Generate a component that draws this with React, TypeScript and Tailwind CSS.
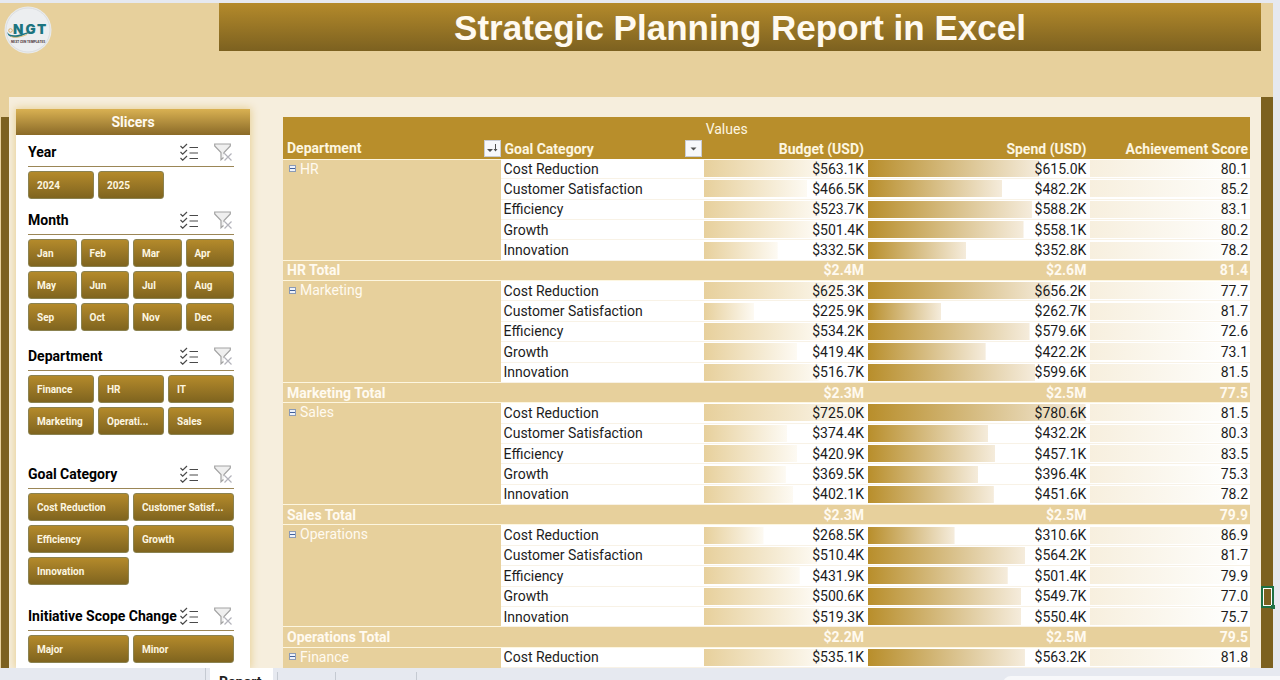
import { FC, useState } from "react";
import clsx from "clsx";

type Row = [category: string, budget: number, spend: number, score: number];

interface Group {
	name: string;
	rows: Row[];
	total?: [string, string, string];
}

const groups: Group[] = [
	{
		name: "HR",
		rows: [
			["Cost Reduction", 563.1, 615.0, 80.1],
			["Customer Satisfaction", 466.5, 482.2, 85.2],
			["Efficiency", 523.7, 588.2, 83.1],
			["Growth", 501.4, 558.1, 80.2],
			["Innovation", 332.5, 352.8, 78.2],
		],
		total: ["$2.4M", "$2.6M", "81.4"],
	},
	{
		name: "Marketing",
		rows: [
			["Cost Reduction", 625.3, 656.2, 77.7],
			["Customer Satisfaction", 225.9, 262.7, 81.7],
			["Efficiency", 534.2, 579.6, 72.6],
			["Growth", 419.4, 422.2, 73.1],
			["Innovation", 516.7, 599.6, 81.5],
		],
		total: ["$2.3M", "$2.5M", "77.5"],
	},
	{
		name: "Sales",
		rows: [
			["Cost Reduction", 725.0, 780.6, 81.5],
			["Customer Satisfaction", 374.4, 432.2, 80.3],
			["Efficiency", 420.9, 457.1, 83.5],
			["Growth", 369.5, 396.4, 75.3],
			["Innovation", 402.1, 451.6, 78.2],
		],
		total: ["$2.3M", "$2.5M", "79.9"],
	},
	{
		name: "Operations",
		rows: [
			["Cost Reduction", 268.5, 310.6, 86.9],
			["Customer Satisfaction", 510.4, 564.2, 81.7],
			["Efficiency", 431.9, 501.4, 79.9],
			["Growth", 500.6, 549.7, 77.0],
			["Innovation", 519.3, 550.4, 75.7],
		],
		total: ["$2.2M", "$2.5M", "79.5"],
	},
	{
		name: "Finance",
		rows: [["Cost Reduction", 535.1, 563.2, 81.8]],
	},
];

const slicers = [
	{ title: "Year", cols: "grid-cols-3", gap: "mt-0.5", items: ["2024", "2025"] },
	{
		title: "Month",
		cols: "grid-cols-4",
		gap: "mt-1.5",
		items: ["Jan", "Feb", "Mar", "Apr", "May", "Jun", "Jul", "Aug", "Sep", "Oct", "Nov", "Dec"],
	},
	{
		title: "Department",
		cols: "grid-cols-3",
		gap: "mt-2.5",
		items: ["Finance", "HR", "IT", "Marketing", "Operati...", "Sales"],
	},
	{
		title: "Goal Category",
		cols: "grid-cols-2",
		gap: "mt-6",
		items: ["Cost Reduction", "Customer Satisf...", "Efficiency", "Growth", "Innovation"],
	},
	{
		title: "Initiative Scope Change",
		cols: "grid-cols-2",
		gap: "mt-4",
		items: ["Major", "Minor"],
	},
];

const Logo: FC = () => (
	<svg viewBox="0 0 48 48" className="h-12 w-12" role="img" aria-label="NGT">
		<circle cx="24" cy="24" r="23.5" fill="#e9ebec" />
		<circle cx="24" cy="24" r="22" fill="#eceef0" stroke="#d6d9db" strokeWidth="0.7" />
		<text x="9" y="27.500" fontFamily="Inter, sans-serif" fontSize="13.500" fontWeight="900" fill="#1c7480">
			<tspan x="9">N</tspan>
			<tspan x="21.500">G</tspan>
			<tspan x="33">T</tspan>
		</text>
		<path d="M3.500 26c1 4 8 4 14 2s11-3 14-1c-6-1-9 1-14 3S4 32 3.500 27z" fill="#1c7480" />
		<path d="M7 30.500c5 2 11 0 16-2" fill="none" stroke="#d8b566" strokeWidth="0.8" />
		<circle cx="6.500" cy="24.500" r="1.800" fill="none" stroke="#d8a85a" strokeWidth="0.9" />
		<text x="7" y="37" fontFamily="Inter, sans-serif" fontSize="3" fontWeight="800" fill="#59494b">
			NEXT GEN TEMPLATES
		</text>
	</svg>
);

const MultiSelectIcon: FC = () => (
	<svg viewBox="0 0 18 18" className="h-[18px] w-[18px]" fill="none" stroke="#4a4a4a" strokeWidth="1.2">
		<path d="M.5 3l2.200 2.200L7 1M.5 9l2.200 2.200L7 7M.5 15l2.200 2.200L7 13M9.500 4.500H18M9.500 10H18M9.500 15.500H18" />
	</svg>
);

const ClearFilterIcon: FC = () => (
	<svg viewBox="0 0 18 18" className="h-[18px] w-[18px]" fill="none" stroke="#a3a3a3" strokeWidth="1.2">
		<path d="M9.500 14.500L7 16.800V9.500L.7 3V1h15.600v2L10 9.500v1.500" fill="#efefef" />
		<path d="M10.500 10.500l7 7M17.500 10.500l-7 7" stroke="#b3b3bb" />
	</svg>
);

const Bar: FC<{ value: number; max: number; tone: string; text: string }> = ({ value, max, tone, text }) => (
	<td
		className={clsx("border-b border-[#f8f2e6] bg-left bg-no-repeat text-right", tone)}
		style={{ backgroundSize: `${(value / max) * 98}% 17px` }}
	>
		{text}
	</td>
);

const Slicer: FC<(typeof slicers)[number]> = ({ title, cols, gap, items }) => {
	const [picked, setPicked] = useState<string>();

	return (
		<section className={clsx("shrink-0", gap)}>
			<div className="flex h-[30px] items-center border-b border-[#9b8656]">
				<h2 className="flex-1 text-sm font-bold whitespace-nowrap text-black">{title}</h2>
				<button type="button" aria-label={`Multi-select ${title}`}>
					<MultiSelectIcon />
				</button>
				<button
					type="button"
					aria-label={`Clear ${title} filter`}
					className="mr-0.5 ml-4"
					onClick={() => setPicked(undefined)}
				>
					<ClearFilterIcon />
				</button>
			</div>
			<div className={clsx("mt-1 grid gap-1", cols)}>
				{items.map((item) => (
					<button
						key={item}
						type="button"
						aria-pressed={picked === item}
						onClick={() => setPicked(item)}
						className="h-7 rounded-[3px] border border-[#8b8250] bg-[linear-gradient(#b48a2b,#7f641f)] pl-2 text-left text-[10px] font-bold whitespace-nowrap text-[#fdf6e0]"
					>
						{item}
					</button>
				))}
			</div>
		</section>
	);
};

const PivotTable: FC = () => (
	<table className="h-full w-full table-fixed border-collapse text-sm leading-4 text-[#1c1c1c]">
		<colgroup>
			<col className="w-[22.5%]" />
			<col className="w-[21%]" />
			<col className="w-[17%]" />
			<col className="w-[23%]" />
			<col className="w-[16.5%]" />
		</colgroup>
		<thead className="bg-[#b88e2b] text-[#fdf6e0]">
			<tr className="h-[21px]">
				<td colSpan={2} />
				<td colSpan={3} className="pt-0.5 pl-0.5">
					Values
				</td>
			</tr>
			<tr className="h-[21px] text-right">
				<th scope="col" className="pl-1">
					<div className="flex h-5 items-center justify-between">
						Department
						<button
							type="button"
							aria-label="Sort Department"
							className="flex h-[17px] w-[17px] items-center justify-center border border-[#c9ccd4] bg-[#f7f8fb]"
						>
							<svg viewBox="0 0 13 13" className="h-[13px] w-[13px]" fill="#505050">
								<path d="M1 7h6l-3 3zM9 2h1v5h1.500l-2 2.500L7.500 7H9z" />
							</svg>
						</button>
					</div>
				</th>
				<th scope="col" className="pl-1">
					<div className="flex h-5 items-center justify-between pr-0.5">
						Goal Category
						<button
							type="button"
							aria-label="Filter Goal Category"
							className="flex h-[17px] w-[17px] items-center justify-center border border-[#c9ccd4] bg-[#f7f8fb]"
						>
							<svg viewBox="0 0 13 13" className="h-[13px] w-[13px]" fill="#505050">
								<path d="M3.500 5.500h6l-3 3z" />
							</svg>
						</button>
					</div>
				</th>
				<th scope="col" className="pr-1">
					Budget (USD)
				</th>
				<th scope="col" className="pr-1">
					Spend (USD)
				</th>
				<th scope="col" className="pr-0.5">
					Achievement Score
				</th>
			</tr>
		</thead>
		{groups.map(({ name, rows, total }) => (
			<tbody key={name} className="bg-white">
				{rows.map(([category, budget, spend, score], i) => (
					<tr key={category}>
						{i === 0 && (
							<th
								scope="rowgroup"
								rowSpan={rows.length}
								className="border-t border-[#fdf6e0] bg-[#e7d09c] pt-0.5 pl-1.5 text-left align-top leading-[14px] font-normal text-[#fffaf0]"
							>
								<div className="flex items-center gap-1">
									<button
										type="button"
										aria-label={`Collapse ${name}`}
										className="flex h-[7px] w-[7px] items-center justify-center border border-[#8c9bb5] bg-[#eef2fa]"
									>
										<span className="h-px w-[5px] bg-[#3f5f9a]" />
									</button>
									{name}
								</div>
							</th>
						)}
						<td className="border-b border-[#f8f2e6] pl-[3px]">{category}</td>
						<Bar
							value={budget}
							max={725}
							tone="bg-[linear-gradient(90deg,#e7d09c,#fdfaf3)] pr-1"
							text={`$${budget.toFixed(1)}K`}
						/>
						<Bar
							value={spend}
							max={780.6}
							tone="bg-[linear-gradient(90deg,#b88e2b,#f5ecdc)] pr-1"
							text={`$${spend.toFixed(1)}K`}
						/>
						<Bar
							value={score}
							max={86.9}
							tone="bg-[linear-gradient(90deg,#f7efde,#fefefc)] pr-0.5"
							text={score.toFixed(1)}
						/>
					</tr>
				))}
				{total && (
					<tr className="border-y border-[#fdf6e0] bg-[#e7d09c] text-right font-bold text-[#fffaf0]">
						<th scope="row" colSpan={2} className="pl-1 text-left">
							{name} Total
						</th>
						{total.map((value, i) => (
							<td key={i} className={i === 2 ? "pr-0.5" : "pr-1"}>
								{value}
							</td>
						))}
					</tr>
				)}
			</tbody>
		))}
	</table>
);

const App: FC = () => (
	<div className="flex h-screen flex-col overflow-hidden bg-[#e6e9f0] font-['Roboto','Liberation_Sans',sans-serif]">
		<div className="mt-[3px] mr-[7px] flex min-h-0 flex-1 flex-col">
			<header className="flex h-[94px] shrink-0 items-start bg-[#e7d09c] pr-3">
				<div className="w-[219px] shrink-0 pt-[3px] pl-1">
					<Logo />
				</div>
				<h1 className="flex h-12 flex-1 items-center justify-center bg-[linear-gradient(#b48a2b,#7c6120)] pt-0.5 font-['Liberation_Sans',sans-serif] text-[35px] font-bold text-[#fffaf0]">
					Strategic Planning Report in Excel
				</h1>
			</header>
			<div className="flex min-h-0 flex-1">
				<div className="w-[9px] shrink-0 border-t-[20px] border-l border-t-[#e7d09c] border-l-[#e7d09c] bg-[#7c6120]" />
				<main className="flex min-w-0 flex-1 overflow-hidden bg-[#f6eedd] pr-[11px] pl-[7px]">
					<aside className="mt-3 flex w-[234px] shrink-0 flex-col overflow-hidden bg-white shadow-[0_0_8px_1px_#e7cf94]">
						<h2 className="h-[26px] shrink-0 bg-[linear-gradient(#d9b152,#8a6a28)] text-center text-sm leading-[26px] font-bold text-[#fffaf0]">
							Slicers
						</h2>
						<div className="flex flex-col pr-4 pl-3">
							{slicers.map((slicer) => (
								<Slicer key={slicer.title} {...slicer} />
							))}
						</div>
					</aside>
					<div className="mt-5 ml-[33px] min-w-0 flex-1">
						<PivotTable />
					</div>
				</main>
				<div className="relative w-3 shrink-0 bg-[#7c6120]">
					<div className="absolute bottom-[60px] left-0 h-[22px] w-[13px] border-2 border-[#1d7145] outline-1 -outline-offset-3 outline-white">
						<span className="absolute -right-[3px] -bottom-[3px] h-1 w-1 bg-[#1d7145]" />
					</div>
				</div>
			</div>
		</div>
		<footer className="flex h-3 shrink-0 items-start overflow-hidden text-sm">
			<div className="mr-1 h-3 w-[206px] border-r border-[#c5cad2]" />
			<a href="#report" className="h-3 w-[63px] bg-white pt-1 pl-[9px] font-bold text-[#222]">
				Report
			</a>
			<div className="mt-1 ml-1 h-2 w-[59px] border-x border-[#c5cad2]" />
			<div className="mt-1 h-2 w-[81px] border-r border-[#c5cad2]" />
			<div className="mt-2 ml-auto h-3 w-[277px] rounded-tl-lg bg-[#f7f8fa]" />
		</footer>
	</div>
);

export default App;
